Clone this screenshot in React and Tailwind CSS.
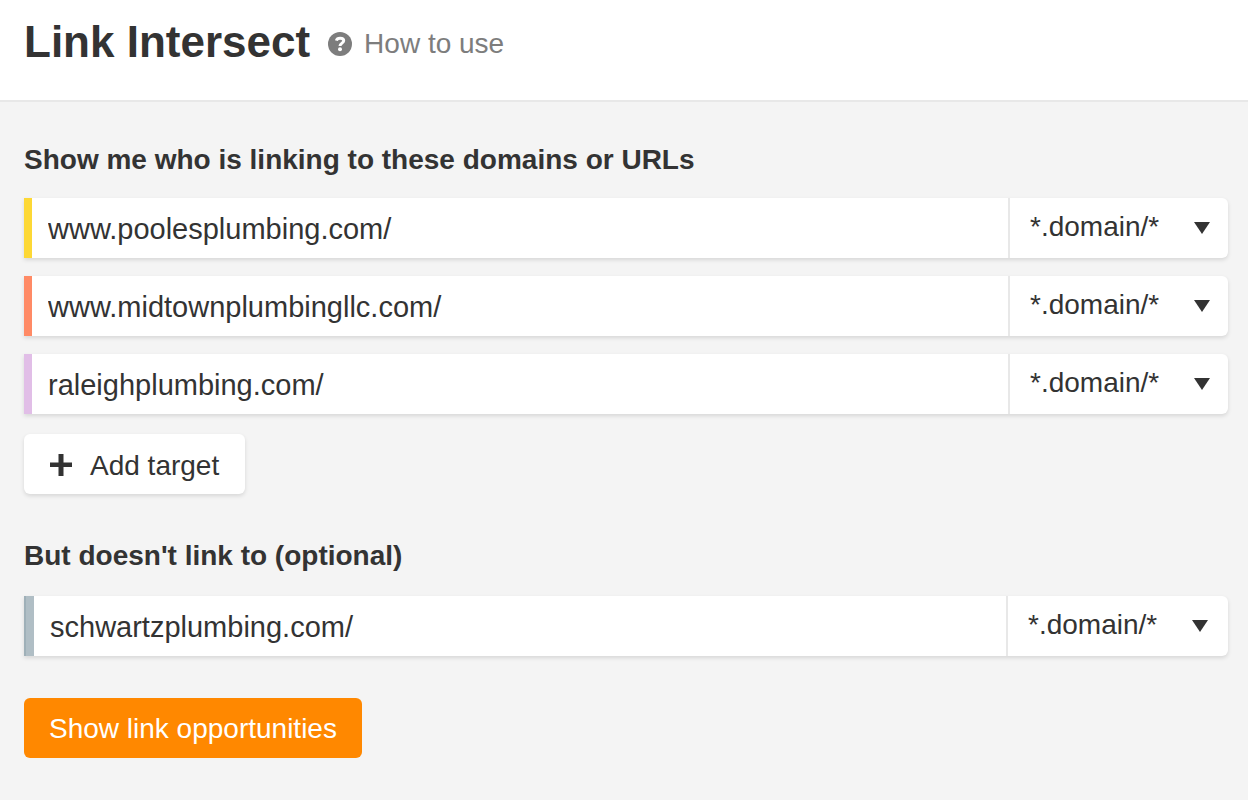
import { useState } from 'react'

const MODES = ['*.domain/*', 'domain/*', 'URL']

function HelpIcon() {
  return (
    <svg viewBox="0 0 24 24" className="w-6 h-6" aria-hidden="true">
      <circle cx="12" cy="12" r="12" fill="#7d7d7d" />
      <path d="M8.400 8.600C8.800 7 10.200 6.300 12.100 6.300c2.200 0 3.600.9 3.600 2.500 0 2.400-3.700 2.300-3.700 5.300" fill="none" stroke="#fff" strokeWidth="3" />
      <circle cx="12" cy="17.300" r="2" fill="#fff" />
    </svg>
  )
}

function TargetRow({ id, label, item, wide, barClass, onChange }) {
  return (
    <div className="flex h-[60px] bg-white rounded-r-md shadow-[0_2px_4px_rgba(0,0,0,0.12)]">
      <div className={`shrink-0 ${wide ? 'w-[10px]' : 'w-2'} ${barClass}`}></div>
      <input
        type="text"
        id={id}
        aria-label={label}
        value={item.url}
        onChange={(e) => onChange({ ...item, url: e.target.value })}
        className="flex-1 min-w-0 px-4 pt-0.5 text-[29px] bg-transparent focus:outline-none"
      />
      <div className={`relative shrink-0 border-l-2 border-[#e8e8e8] ${wide ? 'w-[222px]' : 'w-[220px]'}`}>
        <select
          id={`${id}-mode`}
          aria-label={`${label} mode`}
          value={item.mode}
          onChange={(e) => onChange({ ...item, mode: e.target.value })}
          className="appearance-none w-full h-full pl-5 pr-14 pb-0.5 bg-transparent focus:outline-none"
        >
          {MODES.map(mode => <option key={mode}>{mode}</option>)}
        </select>
        <svg
          viewBox="0 0 16 12"
          className={`absolute top-6 w-4 h-3 pointer-events-none ${wide ? 'right-5' : 'right-[18px]'}`}
          aria-hidden="true"
        >
          <path d="M0 0h16L8 12z" fill="#333" />
        </svg>
      </div>
    </div>
  )
}

const BARS = ['bg-[#fdd835]', 'bg-[#ff8a65]', 'bg-[#e1bee7]']

export default function App() {
  const [targets, setTargets] = useState([
    { url: 'www.poolesplumbing.com/', mode: MODES[0] },
    { url: 'www.midtownplumbingllc.com/', mode: MODES[0] },
    { url: 'raleighplumbing.com/', mode: MODES[0] }
  ])
  const [excluded, setExcluded] = useState({ url: 'schwartzplumbing.com/', mode: MODES[0] })

  const updateTarget = (index, next) => {
    setTargets(prev => prev.map((item, i) => (i === index ? next : item)))
  }

  const addTarget = () => {
    setTargets(prev => [...prev, { url: '', mode: MODES[0] }])
  }

  return (
    <div className="min-h-screen bg-[#f4f4f4] text-[#333] text-[28px] leading-8 font-['Liberation_Sans',Arial,sans-serif]">
      <header className="flex items-center h-[102px] px-6 pb-4 bg-white border-b-2 border-[#e8e8e8]">
        <h1 className="text-[44px] leading-[48px] font-bold">Link Intersect</h1>
        <a href="#how-to-use" className="flex items-center gap-3 ml-[18px] pt-1 text-[#7d7d7d]">
          <HelpIcon />
          How to use
        </a>
      </header>

      <main className="pl-6 pr-5 pt-[42px] pb-10">
        <h2 className="font-bold">Show me who is linking to these domains or URLs</h2>
        <div className="flex flex-col gap-[18px] mt-[22px]">
          {targets.map((item, i) => (
            <TargetRow
              key={i}
              id={`target-${i}`}
              label={`Target ${i + 1}`}
              item={item}
              barClass={BARS[i % BARS.length]}
              onChange={(next) => updateTarget(i, next)}
            />
          ))}
        </div>
        <button
          onClick={addTarget}
          className="flex items-center gap-[18px] h-[60px] mt-5 px-[26px] pt-1 bg-white rounded-md shadow-[0_2px_4px_rgba(0,0,0,0.12)]"
        >
          <svg viewBox="0 0 22 22" className="w-[22px] h-[22px] mb-0.5" aria-hidden="true">
            <path d="M8.500 0h5v8.500H22V13h-8.500v9h-5v-9H0V8.500h8.500z" fill="#333" />
          </svg>
          Add target
        </button>

        <h2 className="font-bold mt-[46px] mb-6">But doesn't link to (optional)</h2>
        <TargetRow
          id="excluded"
          label="Excluded target"
          item={excluded}
          wide
          barClass="bg-[#b0bec5] border-l-2 border-[#9fb0b8]"
          onChange={setExcluded}
        />

        <button className="h-[60px] mt-[42px] px-[25px] pt-0.5 bg-[#ff8800] text-white rounded-md">
          Show link opportunities
        </button>
      </main>
    </div>
  )
}
